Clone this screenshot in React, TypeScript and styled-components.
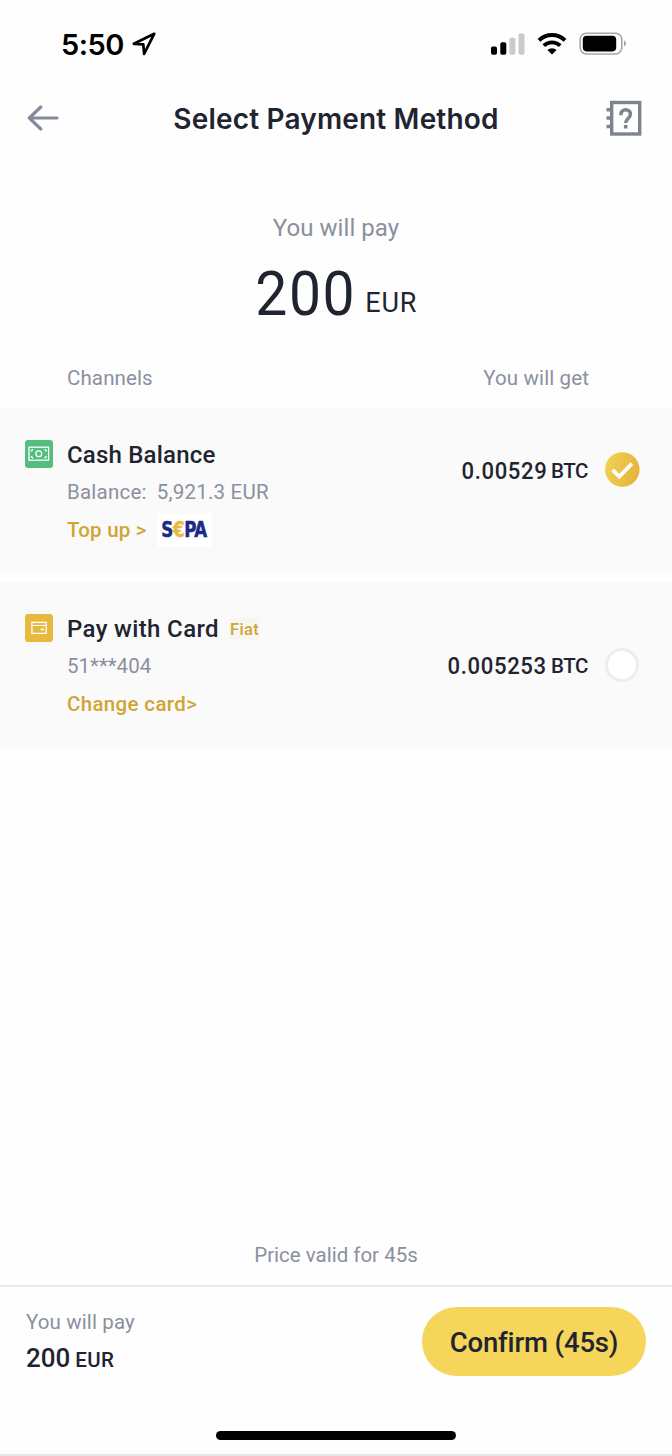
import React from 'react';
import styled, { createGlobalStyle } from 'styled-components';

const colors = {
  ink: '#1f2430',
  muted: '#8a909d',
  gold: '#d0a532',
  yellow: '#f5d55a',
  panel: '#fafafa',
};

const GlobalStyle = createGlobalStyle`
  * { box-sizing: border-box; }
  body { margin: 0; background: #fefefe; }
`;

const Screen = styled.div`
  display: flex;
  flex-direction: column;
  width: 672px;
  height: 1456px;
  overflow: hidden;
  font-family: Roboto, "Liberation Sans", sans-serif;
  color: ${colors.ink};
  background: #fefefe;
  border-bottom: 2px solid #e6e6e6;
  white-space: nowrap;
`;

const StatusBar = styled.div`
  display: flex;
  align-items: center;
  height: 88px;
  padding: 0 45px 0 61px;
  color: #000;
`;

const Clock = styled.span`
  font-family: Inter, sans-serif;
  font-size: 29px;
  font-weight: 600;
  letter-spacing: -0.5px;
  line-height: 40px;
  padding-top: 1px;
`;

const LocationIcon = styled.svg`
  margin-left: 8px;
`;

const StatusIcons = styled.div`
  display: flex;
  align-items: center;
  margin-left: auto;
`;

const NavBar = styled.header`
  display: grid;
  grid-template-columns: 36px 1fr 36px;
  align-items: center;
  height: 60px;
  padding: 0 30px 0 27px;
`;

const Title = styled.h1`
  margin: 0;
  padding: 1px 0 0 3px;
  text-align: center;
  font-family: Inter, sans-serif;
  font-size: 28px;
  font-weight: 600;
  letter-spacing: 0.18px;
  line-height: 40px;
`;

const Summary = styled.section`
  display: flex;
  flex-direction: column;
  align-items: center;
  height: 175px;
  padding-top: 64px;
`;

const SummaryLabel = styled.div`
  font-size: 24px;
  letter-spacing: 0.06px;
  line-height: 33px;
  color: ${colors.muted};
`;

const SummaryAmount = styled.div`
  display: flex;
  align-items: flex-start;
  margin-top: 19px;
  padding-left: 1px;
`;

const BigValue = styled.span`
  margin: 0 -4.4px;
  font-size: 62px;
  line-height: 60px;
  letter-spacing: 1.6px;
  transform: scaleX(0.92);
`;

const BigCurrency = styled.span`
  margin: 23px 0 0 9px;
  font-size: 27px;
  line-height: 32px;
  letter-spacing: 0.8px;
`;

const ColumnHeads = styled.div`
  display: flex;
  justify-content: space-between;
  height: 85px;
  padding: 39px 83px 0 67px;
  font-size: 20.5px;
  line-height: 32px;
  letter-spacing: 0.12px;
  color: ${colors.muted};
`;

const Channels = styled.div`
  display: grid;
  grid-template-rows: 165px 165px;
  gap: 9px;
`;

const Channel = styled.div`
  display: flex;
  padding-left: 25.4px;
  background: ${colors.panel};
`;

const ChannelIcon = styled.div<{ $color: string }>`
  display: flex;
  align-items: center;
  justify-content: center;
  width: 28px;
  height: 28px;
  margin-top: 32px;
  border-radius: 3px;
  background: ${(p) => p.$color};
`;

const ChannelInfo = styled.div`
  flex: 1;
  padding: 29px 0 0 13.6px;
`;

const ChannelName = styled.div<{ $track: string }>`
  display: flex;
  align-items: center;
  gap: 10px;
  height: 36px;
  font-size: 24px;
  font-weight: 500;
  letter-spacing: ${(p) => p.$track};
`;

const Tag = styled.span`
  height: 22px;
  padding-left: 1px;
  font-size: 16.5px;
  line-height: 23px;
  letter-spacing: 0.4px;
  color: ${colors.gold};
  background: #f7f6f3;
`;

const Detail = styled.div<{ $track?: string }>`
  display: flex;
  gap: 10px;
  height: 38px;
  font-size: 20.5px;
  line-height: 38px;
  letter-spacing: ${(p) => p.$track ?? '0.22px'};
  color: ${colors.muted};
`;

const Action = styled.div<{ $track: string }>`
  display: flex;
  align-items: center;
  gap: 10px;
  height: 37px;
  font-size: 20.5px;
  font-weight: 500;
  letter-spacing: ${(p) => p.$track};
  color: ${colors.gold};
`;

const SepaBadge = styled.span`
  display: flex;
  align-items: center;
  justify-content: center;
  width: 55px;
  height: 34px;
  border-radius: 3px;
  background: #fff;
`;

const SepaMark = styled.span`
  font-family: "DejaVu Sans Condensed", "DejaVu Sans", sans-serif;
  font-size: 22px;
  font-weight: 700;
  letter-spacing: -0.4px;
  color: #1b2a86;
  transform: scaleX(0.84);
  -webkit-text-stroke: 0.5px currentColor;
`;

const Euro = styled.span`
  color: #e6b93f;
`;

const Quote = styled.div<{ $offset: string }>`
  display: flex;
  align-items: center;
  height: 35px;
  margin: ${(p) => p.$offset} 32px 0 0;
`;

const QuoteValue = styled.span`
  font-size: 24px;
  font-weight: 500;
  line-height: 36px;
  letter-spacing: 0.7px;
  padding-top: 2px;
  transform: scaleX(0.92);
  transform-origin: right center;
`;

const QuoteUnit = styled.span`
  margin: 3px 17px 0 4px;
  font-size: 20.5px;
  font-weight: 500;
  line-height: 36px;
  letter-spacing: -0.4px;
`;

const Validity = styled.div`
  margin-top: auto;
  height: 46px;
  text-align: center;
  font-size: 20.5px;
  line-height: 32px;
  letter-spacing: 0;
  color: ${colors.muted};
`;

const Footer = styled.footer`
  display: flex;
  justify-content: space-between;
  height: 146px;
  padding: 20px 26px 0 26px;
  border-top: 2px solid #e9eaec;
`;

const Total = styled.div`
  display: flex;
  flex-direction: column;
`;

const TotalLabel = styled.div`
  height: 30px;
  font-size: 20.5px;
  line-height: 30px;
  letter-spacing: 0.12px;
  color: ${colors.muted};
`;

const TotalAmount = styled.div`
  display: flex;
  align-items: baseline;
  gap: 5px;
  height: 42px;
  font-weight: 500;
  line-height: 43px;
`;

const TotalValue = styled.span`
  font-size: 26px;
`;

const TotalUnit = styled.span`
  font-size: 20.5px;
  letter-spacing: 0.3px;
`;

const ConfirmButton = styled.button`
  width: 224px;
  height: 69px;
  padding: 1px 0 0;
  border: 0;
  border-radius: 35px;
  background: ${colors.yellow};
  color: ${colors.ink};
  font-family: inherit;
  font-size: 27.5px;
  font-weight: 500;
  letter-spacing: -0.15px;
`;

const HomeBar = styled.div`
  align-self: center;
  flex: none;
  width: 240px;
  height: 9px;
  margin-bottom: 14px;
  border-radius: 5px;
  background: #000;
`;

const SignalIcon = () => (
  <svg width="34" height="22" viewBox="0 0 34 22">
    <rect x="0" y="13.5" width="6" height="8.2" rx="1.8" fill="#000" />
    <rect x="9.3" y="9.3" width="6" height="12.4" rx="1.8" fill="#000" />
    <rect x="18.4" y="4.8" width="6" height="16.9" rx="1.8" fill="#c8cacd" />
    <rect x="27.5" y="0.4" width="6" height="21.3" rx="1.8" fill="#c8cacd" />
  </svg>
);

const WifiIcon = styled.svg`
  margin: 0 12px 0 12px;
`;

const CashIcon = () => (
  <svg width="22" height="16" viewBox="0 0 22 16" fill="none" stroke="#fff">
    <rect x="1" y="1.2" width="19.6" height="13" strokeWidth="1.3" />
    <circle cx="10.8" cy="7.7" r="2.9" strokeWidth="1.3" />
    <path d="M3 5.2 5 3.2M18.6 5.2l-2-2M3 10.2l2 2M18.6 10.2l-2 2" strokeWidth="1.5" />
  </svg>
);

const CardIcon = () => (
  <svg width="16" height="14" viewBox="0 0 16 14" fill="none" stroke="#fff">
    <rect x="0.9" y="1.4" width="14.2" height="11" strokeWidth="1.3" />
    <path d="M1 4.5h14" strokeWidth="1" />
    <path d="M9.8 8.4h3" strokeWidth="1.9" />
  </svg>
);

const SelectedMark = () => (
  <svg width="35" height="35" viewBox="0 0 35 35">
    <defs>
      <linearGradient id="gold" x1="0" y1="0" x2="1" y2="0.25">
        <stop offset="0" stopColor="#f2d459" />
        <stop offset="1" stopColor="#e6b53c" />
      </linearGradient>
    </defs>
    <circle cx="17.3" cy="17.5" r="17.3" fill="url(#gold)" />
    <path d="m7.6 17.9 6.7 6.6 12.6-12.8" fill="none" stroke="#fff" strokeWidth="3.8" />
  </svg>
);

const Radio = styled.span`
  width: 34px;
  height: 34px;
  margin-right: 1px;
  border: 3px solid #ecedf0;
  border-radius: 50%;
  background: #fff;
`;

export default function App() {
  return (
    <>
      <GlobalStyle />
      <Screen>
        <StatusBar>
          <Clock>5:50</Clock>
          <LocationIcon width="24" height="24" viewBox="0 0 24 24" fill="none" stroke="#000" strokeWidth="2.7" strokeLinejoin="round">
            <path d="M22.2 1.8 1.9 11.8l9.4.6.8 9.4z" />
          </LocationIcon>
          <StatusIcons>
            <SignalIcon />
            <WifiIcon width="30" height="22" viewBox="0 0 30 22" fill="none" stroke="#000">
              <path d="M2 7.4a18.6 18.6 0 0 1 26 0" strokeWidth="4" />
              <path d="M6.8 12.7a11.8 11.8 0 0 1 16.4 0" strokeWidth="3.8" />
              <path d="M10.4 17a6.8 6.8 0 0 1 9.2 0L15 21.4z" fill="#000" stroke="none" />
            </WifiIcon>
            <svg width="48" height="24" viewBox="0 0 48 24">
              <rect x="1.2" y="1.2" width="41.6" height="20.8" rx="6.3" fill="none" stroke="#a4a6aa" strokeWidth="1.6" />
              <rect x="3.8" y="3.8" width="33.4" height="15.6" rx="3.8" fill="#000" />
              <path d="M45 8.6c2.6 1 2.6 5 0 6z" fill="#a4a6aa" />
            </svg>
          </StatusIcons>
        </StatusBar>

        <NavBar>
          <svg width="33" height="26" viewBox="0 0 33 26" fill="none" stroke="#848b9a" strokeWidth="3.2" strokeLinecap="round" strokeLinejoin="round">
            <path d="M30 13H2.5M13.8 2 2.3 13l11.5 11" />
          </svg>
          <Title>Select Payment Method</Title>
          <svg width="36" height="36" viewBox="0 0 36 36" fill="none" stroke="#7d8390">
            <rect x="5.7" y="2.5" width="28" height="31.5" strokeWidth="3.4" />
            <path d="M0.5 9.8h5M0.5 18h5M0.5 26.5h5" strokeWidth="3.4" />
            <path d="M15 15.2v-.9c0-6 9.4-6 9.4 0 0 4.2-4.7 4.4-4.7 8.8" strokeWidth="3.5" />
            <path d="M19.7 24.9v3.6" strokeWidth="3.6" />
          </svg>
        </NavBar>

        <Summary>
          <SummaryLabel>You will pay</SummaryLabel>
          <SummaryAmount>
            <BigValue>200</BigValue>
            <BigCurrency>EUR</BigCurrency>
          </SummaryAmount>
        </Summary>

        <ColumnHeads>
          <span>Channels</span>
          <span>You will get</span>
        </ColumnHeads>

        <Channels>
          <Channel>
            <ChannelIcon $color="#53be7d"><CashIcon /></ChannelIcon>
            <ChannelInfo>
              <ChannelName $track="0.2px">Cash Balance</ChannelName>
              <Detail><span>Balance:</span><span>5,921.3 EUR</span></Detail>
              <Action $track="0.2px">
                <span>Top up &gt;</span>
                <SepaBadge><SepaMark>S<Euro>€</Euro>PA</SepaMark></SepaBadge>
              </Action>
            </ChannelInfo>
            <Quote $offset="44px">
              <QuoteValue>0.00529</QuoteValue>
              <QuoteUnit>BTC</QuoteUnit>
              <SelectedMark />
            </Quote>
          </Channel>
          <Channel>
            <ChannelIcon $color="#e8b93f"><CardIcon /></ChannelIcon>
            <ChannelInfo>
              <ChannelName $track="0.36px">Pay with Card<Tag>Fiat</Tag></ChannelName>
              <Detail $track="0.02px">51***404</Detail>
              <Action $track="0.35px">Change card&gt;</Action>
            </ChannelInfo>
            <Quote $offset="65px">
              <QuoteValue>0.005253</QuoteValue>
              <QuoteUnit>BTC</QuoteUnit>
              <Radio />
            </Quote>
          </Channel>
        </Channels>

        <Validity>Price valid for 45s</Validity>

        <Footer>
          <Total>
            <TotalLabel>You will pay</TotalLabel>
            <TotalAmount>
              <TotalValue>200</TotalValue>
              <TotalUnit>EUR</TotalUnit>
            </TotalAmount>
          </Total>
          <ConfirmButton>Confirm (45s)</ConfirmButton>
        </Footer>
        <HomeBar />
      </Screen>
    </>
  );
}
